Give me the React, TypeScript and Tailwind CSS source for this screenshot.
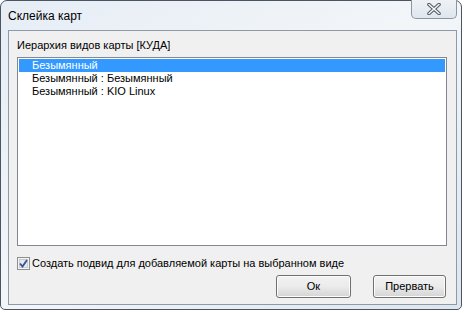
import React from "react";

const rows = ["Безымянный", "Безымянный : Безымянный", "Безымянный : KIO Linux"];

const WinButton: React.FC<{ label: string; width: string }> = ({ label, width }) => (
  <button
    className={`${width} h-[23px] rounded-[3px] border border-[#707070] bg-gradient-to-b from-[#f2f2f2] via-[#ebebeb] to-[#d4d4d4] text-[11px] text-black shadow-[inset_0_0_0_1px_#fcfcfc]`}
  >
    {label}
  </button>
);

const App: React.FC = () => {
  return (
    <div className="w-[465px] h-[313px] bg-white overflow-hidden" style={{ fontFamily: '"Liberation Sans", Arial, sans-serif' }}>
      <div className="relative w-[462px] h-[310px] border border-[#4b5561] rounded-t-[7px] rounded-b-[5px] bg-gradient-to-br from-[#e6edf5] via-[#f3f6f9] to-[#dde5ee] flex flex-col">
        <div className="h-[29px] flex items-center pl-[7px] text-[12px] text-black">Склейка карт</div>
        <div className="absolute top-[-1px] right-[4px] w-[46px] h-[19px] border border-t-0 border-[#8c96a3] rounded-b-[5px] bg-gradient-to-b from-[#eef2f6] to-[#dfe6ee] flex items-center justify-center">
          <svg width="14" height="12" viewBox="0 0 14 12">
            <path d="M2 1.5 L12 10.5 M12 1.5 L2 10.5" stroke="#50575f" strokeWidth="3.6" strokeLinecap="round" />
            <path d="M2 1.5 L12 10.5 M12 1.5 L2 10.5" stroke="#f4f6f8" strokeWidth="1.6" strokeLinecap="round" />
          </svg>
        </div>
        <div className="ml-[7px] mr-[4px] h-[275px] border border-[#8e9aa8] bg-[#f0f0f0] flex flex-col pl-[8px] pr-[9px]">
          <div className="mt-[7px] h-[15px] leading-[15px] text-[11px] text-black">Иерархия видов карты [КУДА]</div>
          <div className="mt-[4px] h-[189px] border border-[#828790] bg-white p-px flex flex-col">
            {rows.map((r, i) => (
              <div
                key={r}
                className={`h-[13px] leading-[13px] pl-[13px] text-[11px] ${i === 0 ? "bg-[#3399ff] text-white" : "text-black"}`}
              >
                {r}
              </div>
            ))}
          </div>
          <div className="mt-[11px] h-[13px] flex items-center gap-[2px] text-[11px] text-black">
            <svg width="13" height="13" viewBox="0 0 13 13">
              <rect x="0.5" y="0.5" width="12" height="12" fill="#f4f4f4" stroke="#8e8f8f" />
              <rect x="2.5" y="2.5" width="8" height="8" fill="#e6e9ee" stroke="#c6ccd5" />
              <path d="M3 6.5 L5.5 9.5 L10 3" fill="none" stroke="#3a4f8f" strokeWidth="1.8" />
            </svg>
            <span>Создать подвид для добавляемой карты на выбранном виде</span>
          </div>
          <div className="mt-[5px] flex justify-end gap-[22px] pr-[1px]">
            <WinButton label="Ок" width="w-[75px]" />
            <WinButton label="Прервать" width="w-[73px]" />
          </div>
        </div>
      </div>
    </div>
  );
};

export default App;
